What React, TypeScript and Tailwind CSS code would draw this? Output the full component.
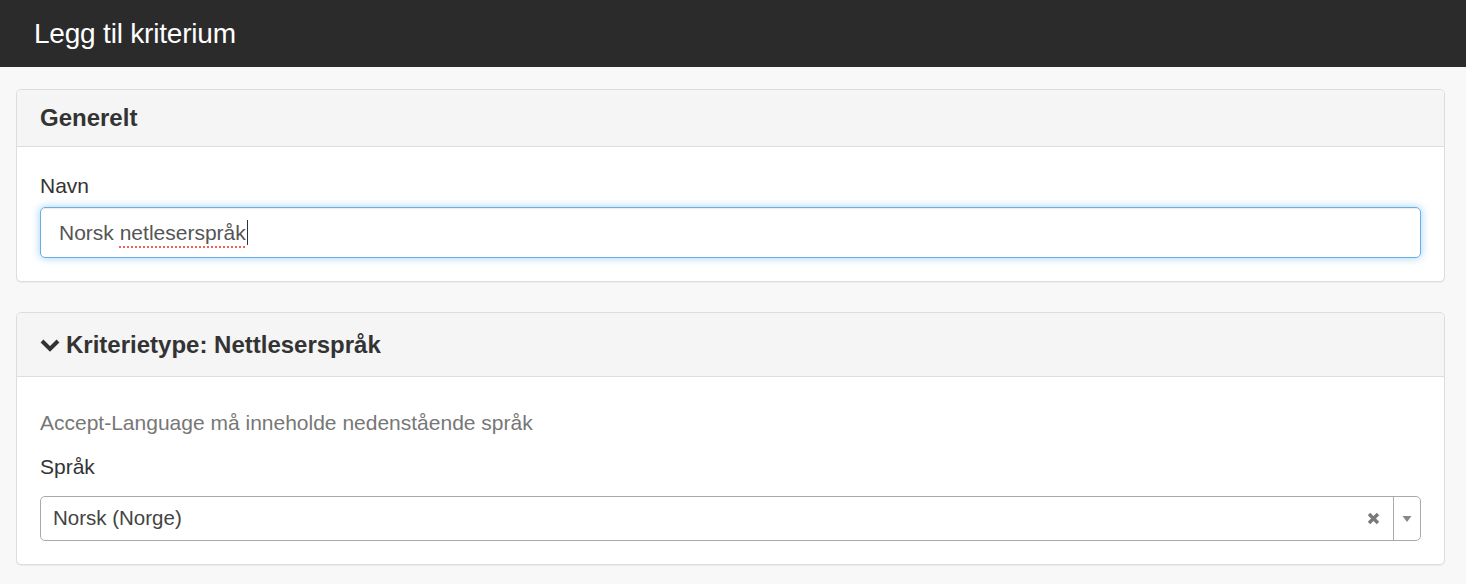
import React from "react";

const font = { fontFamily: '"Liberation Sans", Arial, Helvetica, sans-serif' };

function Panel({ title, chevron, children }: { title: string; chevron?: boolean; children: React.ReactNode }) {
  return (
    <div className="bg-white border border-[#dddddd] rounded-[5px] shadow-[0_1px_1px_rgba(0,0,0,0.05)]">
      <div className="bg-[#f5f5f5] border-b border-[#dddddd] rounded-t-[5px] px-[23px] flex items-center">
        {chevron && (
          <svg width="22" height="16" viewBox="0 0 22 16" className="mr-[5px] -ml-[1px]">
            <path d="M3 4 L11 12 L19 4" fill="none" stroke="#333" strokeWidth="4" strokeLinejoin="miter" />
          </svg>
        )}
        <h3 className="font-bold text-[24px] text-[#333333] leading-none">{title}</h3>
      </div>
      <div className="px-[23px]">{children}</div>
    </div>
  );
}

export default function App() {
  return (
    <div className="min-h-[584px] bg-[#f8f8f8] text-[#333333]" style={font}>
      <div className="h-[67px] bg-[#2b2b2b] flex items-center pl-[34px]">
        <h1 className="text-white text-[28px] leading-none tracking-[-0.2px]">Legg til kriterium</h1>
      </div>
      <div className="pl-[16px] pr-[21px] pt-[22px] flex flex-col gap-[30px]">
        <div className="[&>div>div:first-child]:h-[57px]">
          <Panel title="Generelt">
            <div className="pt-[28px] pb-[23px]">
              <div className="text-[21px] leading-none mb-[11px]">Navn</div>
              <div className="h-[51px] border border-[#66afe9] rounded-[5px] shadow-[inset_0_1px_1px_rgba(0,0,0,0.075),0_0_8px_rgba(102,175,233,0.6)] flex items-center px-[18px]">
                <span className="text-[21px] text-[#555555] leading-none">
                  Norsk{" "}
                  <span className="underline decoration-dotted decoration-[#f0645a] decoration-[2px] underline-offset-[6px]">
                    netleserspråk
                  </span>
                </span>
                <span className="inline-block w-[1.5px] h-[25px] bg-[#333] ml-[1px]" />
              </div>
            </div>
          </Panel>
        </div>
        <div className="[&>div>div:first-child]:h-[64px]">
          <Panel title="Kriterietype: Nettleserspråk" chevron>
            <div className="pt-[35px] pb-[23px]">
              <div className="text-[21px] leading-none text-[#777777] mb-[23px]">
                Accept-Language må inneholde nedenstående språk
              </div>
              <div className="text-[21px] leading-none mb-[19px]">Språk</div>
              <div className="h-[45px] border border-[#aaaaaa] rounded-[5px] flex items-stretch">
                <div className="flex-1 flex items-center pl-[12px] text-[20.5px] text-[#444444]">Norsk (Norge)</div>
                <div className="w-[40px] flex items-center justify-center">
                  <svg width="13" height="13" viewBox="0 0 13 13">
                    <path d="M2 2 L11 11 M11 2 L2 11" stroke="#7a7a7a" strokeWidth="3.4" />
                  </svg>
                </div>
                <div className="w-[27px] border-l border-[#aaaaaa] flex items-center justify-center">
                  <svg width="10" height="8" viewBox="0 0 10 8">
                    <path d="M0.5 1 L9.5 1 L5 7 Z" fill="#888" />
                  </svg>
                </div>
              </div>
            </div>
          </Panel>
        </div>
      </div>
    </div>
  );
}
